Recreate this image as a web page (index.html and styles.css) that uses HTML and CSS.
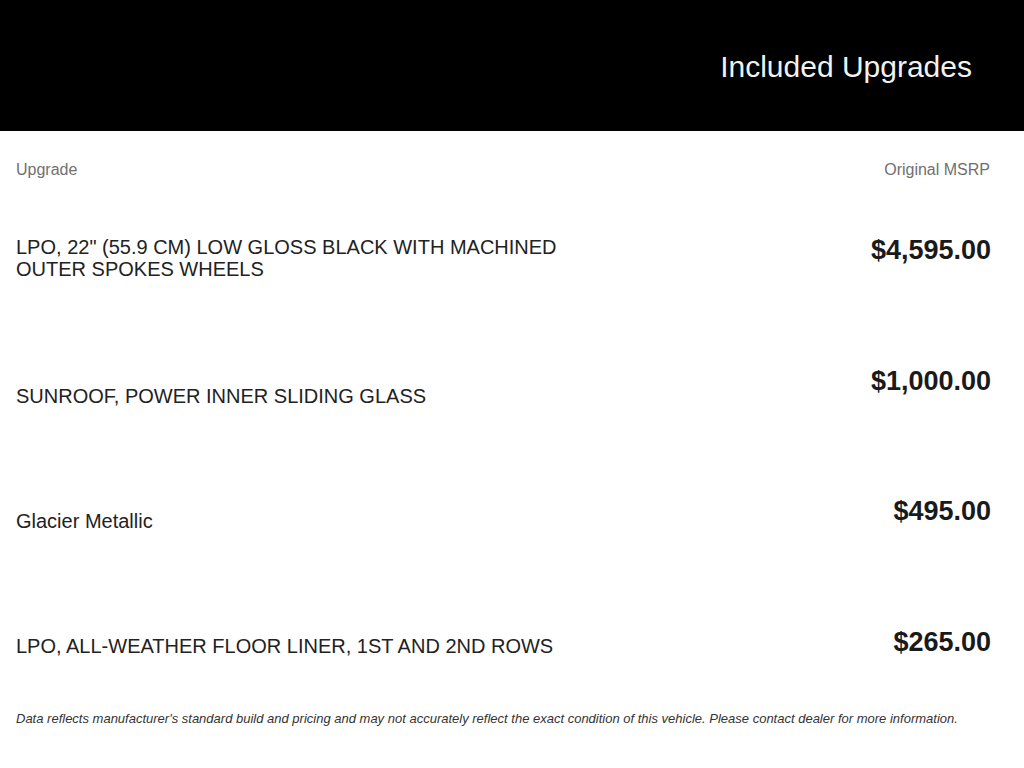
FILE: index.html
```html
<!DOCTYPE html>
<html lang="en">
<head>
<meta charset="utf-8">
<title>Included Upgrades</title>
<link rel="stylesheet" href="styles.css">
</head>
<body>
<header class="banner">
  <h1 class="banner__title">Included Upgrades</h1>
</header>
<main class="upgrades">
  <div class="upgrades__head">
    <span>Upgrade</span>
    <span>Original MSRP</span>
  </div>
  <div class="upgrade upgrade--first">
    <div class="upgrade__name upgrade__name--a">LPO, 22" (55.9 CM) LOW GLOSS BLACK WITH MACHINED<br>OUTER SPOKES WHEELS</div>
    <div class="upgrade__price">$4,595.00</div>
  </div>
  <div class="upgrade">
    <div class="upgrade__name upgrade__name--b">SUNROOF, POWER INNER SLIDING GLASS</div>
    <div class="upgrade__price">$1,000.00</div>
  </div>
  <div class="upgrade">
    <div class="upgrade__name upgrade__name--c">Glacier Metallic</div>
    <div class="upgrade__price">$495.00</div>
  </div>
  <div class="upgrade">
    <div class="upgrade__name upgrade__name--d">LPO, ALL-WEATHER FLOOR LINER, 1ST AND 2ND ROWS</div>
    <div class="upgrade__price">$265.00</div>
  </div>
  <p class="disclaimer">Data reflects manufacturer's standard build and pricing and may not accurately reflect the exact condition of this vehicle. Please contact dealer for more information.</p>
</main>
</body>
</html>
```

FILE: styles.css
```css
* { box-sizing: border-box; }
html, body {
  margin: 0;
  padding: 0;
  background: #ffffff;
  font-family: "Liberation Sans", Arial, sans-serif;
  color: #222222;
}
.banner {
  height: 131px;
  background: #000000;
  display: flex;
  justify-content: flex-end;
  padding: 49px 52px 0 0;
}
.banner__title {
  margin: 0;
  font-size: 30px;
  line-height: 36px;
  font-weight: normal;
  color: #f2f2f2;
}
.upgrades {
  padding: 0 34px 0 16px;
}
.upgrades__head {
  display: flex;
  justify-content: space-between;
  font-size: 16px;
  line-height: 18px;
  color: #707070;
  padding-top: 30px;
}
.upgrade {
  display: flex;
  justify-content: space-between;
  align-items: flex-start;
  height: 130.7px;
}
.upgrade--first {
  margin-top: 56px;
}
.upgrade__name {
  font-size: 20px;
  line-height: 22px;
  color: #222222;
}
.upgrade__name--a { margin-top: 1px; }
.upgrade__name--b { margin-top: 19px; }
.upgrade__name--c { margin-top: 13.5px; }
.upgrade__name--d { margin-top: 8px; }
.upgrade__price {
  font-size: 27px;
  line-height: 31px;
  font-weight: bold;
  color: #1a1a1a;
  margin-right: -1px;
}
.disclaimer {
  margin: -47px 0 0 0;
  font-size: 13px;
  line-height: 16px;
  font-style: italic;
  color: #333333;
}
```
